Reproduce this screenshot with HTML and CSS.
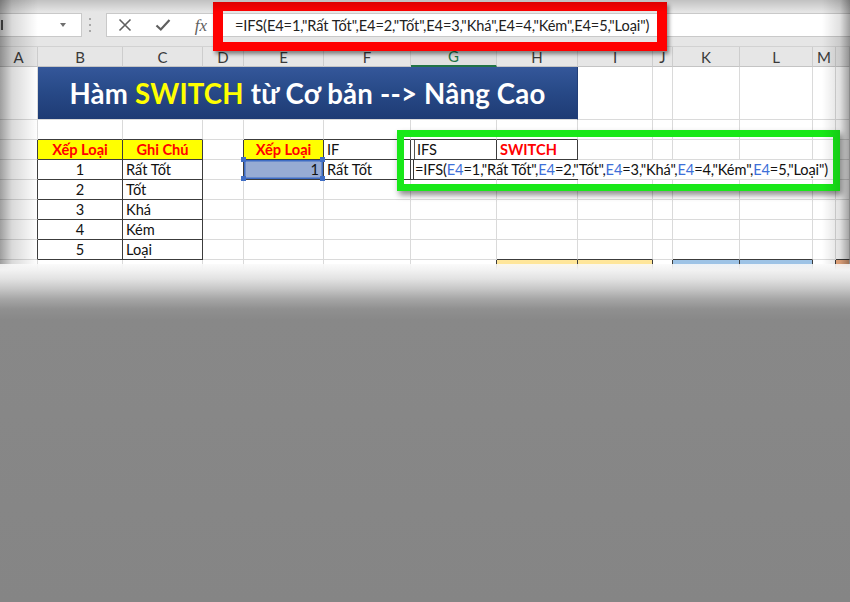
FILE: index.html
```html
<!DOCTYPE html>
<html lang="vi">
<head>
<meta charset="utf-8">
<title>Hàm SWITCH từ Cơ bản --> Nâng Cao</title>
<link rel="stylesheet" href="styles.css">
</head>
<body>
<div class="page">
  <div class="toolbar">
    <div class="namebox"><span class="nb-stub"></span><span class="caret"></span></div>
    <div class="grip"><i></i><i></i><i></i></div>
    <div class="fbar">
      <div class="fbtn">
        <svg width="14" height="14" viewBox="0 0 14 14"><path d="M1.5 1.5 L12.5 12.5 M12.5 1.5 L1.5 12.5" stroke="#5f5f5f" stroke-width="1.6" fill="none"/></svg>
      </div>
      <div class="fbtn">
        <svg width="16" height="14" viewBox="0 0 16 14"><path d="M1.5 7.5 L5.8 11.5 L14.5 2" stroke="#5f5f5f" stroke-width="2.2" fill="none"/></svg>
      </div>
      <div class="fbtn fx">fx</div>
      <div class="ftext">=IFS(E4=1,"Rất Tốt",E4=2,"Tốt",E4=3,"Khá",E4=4,"Kém",E4=5,"Loại")</div>
    </div>
  </div>

  <table class="sheet">
    <colgroup>
      <col class="cA"><col class="cB"><col class="cC"><col class="cD"><col class="cE"><col class="cF"><col class="cG"><col class="cH"><col class="cI"><col class="cJ"><col class="cK"><col class="cL"><col class="cM"><col class="cN">
    </colgroup>
    <thead>
      <tr>
        <th>A</th><th>B</th><th>C</th><th>D</th><th>E</th><th>F</th><th class="act">G</th><th>H</th><th>I</th><th>J</th><th>K</th><th>L</th><th>M</th><th></th>
      </tr>
    </thead>
    <tbody>
      <tr class="tall">
        <td></td>
        <td class="banner" colspan="7">Hàm <span class="hl">SWITCH</span> từ Cơ bản --&gt; Nâng Cao</td>
        <td></td><td></td><td></td><td></td><td></td><td></td>
      </tr>
      <tr>
        <td></td><td class="bb"></td><td class="bb"></td><td></td><td class="bb"></td><td class="bb"></td><td class="bb"></td><td class="bb"></td><td></td><td></td><td></td><td></td><td></td><td></td>
      </tr>
      <tr>
        <td class="rb"></td>
        <td class="rb bb hdr">Xếp Loại</td>
        <td class="rb bb hdr">Ghi Chú</td>
        <td class="rb"></td>
        <td class="rb bb hdr">Xếp Loại</td>
        <td class="rb bb">IF</td>
        <td class="rb bb cur">IFS</td>
        <td class="rb bb red">SWITCH</td>
        <td></td><td></td><td></td><td></td><td></td><td></td>
      </tr>
      <tr>
        <td class="rb"></td>
        <td class="rb bb c">1</td>
        <td class="rb bb">Rất Tốt</td>
        <td class="rb"></td>
        <td class="rb bb sel r">1</td>
        <td class="rb bb">Rất Tốt</td>
        <td class="bb edit"><span class="edit-text">=IFS(<b>E4</b>=1,"Rất Tốt",<b>E4</b>=2,"Tốt",<b>E4</b>=3,"Khá",<b>E4</b>=4,"Kém",<b>E4</b>=5,"Loại")</span></td>
        <td class="rb bb"></td>
        <td></td><td></td><td></td><td></td><td></td><td></td>
      </tr>
      <tr>
        <td class="rb"></td><td class="rb bb c">2</td><td class="rb bb">Tốt</td><td></td><td></td><td></td><td></td><td></td><td></td><td></td><td></td><td></td><td></td><td></td>
      </tr>
      <tr>
        <td class="rb"></td><td class="rb bb c">3</td><td class="rb bb">Khá</td><td></td><td></td><td></td><td></td><td></td><td></td><td></td><td></td><td></td><td></td><td></td>
      </tr>
      <tr>
        <td class="rb"></td><td class="rb bb c">4</td><td class="rb bb">Kém</td><td></td><td></td><td></td><td></td><td></td><td></td><td></td><td></td><td></td><td></td><td></td>
      </tr>
      <tr>
        <td class="rb"></td><td class="rb bb c">5</td><td class="rb bb">Loại</td><td></td><td></td><td></td><td></td><td class="bb"></td><td class="bb"></td><td></td><td class="bb"></td><td class="bb"></td><td></td><td class="bb"></td>
      </tr>
      <tr>
        <td></td><td></td><td></td><td></td><td></td><td></td><td class="rb"></td><td class="rb yel"></td><td class="rb yel"></td><td class="rb"></td><td class="rb blu"></td><td class="rb blu"></td><td class="rb"></td><td class="org"></td>
      </tr>
      <tr>
        <td></td><td></td><td></td><td></td><td></td><td></td><td></td><td></td><td></td><td></td><td></td><td></td><td></td><td></td>
      </tr>
    </tbody>
  </table>

  <div class="redbox"></div>
  <div class="greenbox"></div>
  <div class="vig-left"></div>
  <div class="vig-right"></div>
  <div class="vig-top"></div>
  <div class="fade-bottom"></div>
</div>
</body>
</html>
```

FILE: styles.css
```css
* { box-sizing: border-box; }
html, body { margin: 0; padding: 0; }
body { font-family: Lato, "Noto Sans", sans-serif; background: #878787; }

.page {
  position: relative;
  width: 850px;
  height: 602px;
  overflow: hidden;
  background: #fff;
}

/* ---------- toolbar ---------- */
.toolbar {
  display: flex;
  align-items: flex-start;
  height: 47px;
  padding-top: 13px;
  background: #e6e6e6;
  border-bottom: 1px solid #d2d2d2;
}
.namebox {
  width: 82px;
  height: 24px;
  background: #fff;
  border: 1px solid #c9c9c9;
  border-left: none;
  display: flex;
  align-items: center;
}
.nb-stub {
  width: 1.5px;
  height: 10px;
  margin-left: 1px;
  background: #555;
}
.caret {
  margin-left: auto;
  margin-right: 15px;
  width: 0;
  height: 0;
  border-left: 3.5px solid transparent;
  border-right: 3.5px solid transparent;
  border-top: 4px solid #6f6f6f;
}
.grip {
  width: 24px;
  height: 24px;
  padding-left: 7px;
  display: flex;
  flex-direction: column;
  justify-content: center;
  gap: 4px;
}
.grip i {
  display: block;
  width: 2px;
  height: 2px;
  background: #a8a8a8;
}
.fbar {
  flex: 1;
  height: 24px;
  background: #fff;
  border: 1px solid #c9c9c9;
  border-right: none;
  display: flex;
  align-items: center;
}
.fbtn {
  width: 38px;
  display: flex;
  justify-content: center;
  align-items: center;
}
.fbtn:first-child { margin-left: -1px; }
.fx {
  font-family: "Liberation Serif", serif;
  font-style: italic;
  font-size: 17px;
  color: #5f5f5f;
  line-height: 1;
}
.ftext {
  padding-left: 15px;
  font-size: 14.6px;
  letter-spacing: -0.1px;
  color: #222;
  white-space: nowrap;
}

/* ---------- sheet ---------- */
.sheet {
  table-layout: fixed;
  width: 850px;
  border-collapse: separate;
  border-spacing: 0;
  font-size: 14.6px;
  color: #111;
}
.cA { width: 38px; } .cB { width: 85px; } .cC { width: 80px; } .cD { width: 41px; }
.cE { width: 80px; } .cF { width: 87px; } .cG { width: 86px; } .cH { width: 81px; }
.cI { width: 75px; } .cJ { width: 20px; } .cK { width: 67px; } .cL { width: 73px; }
.cM { width: 23px; } .cN { width: 14px; }

.sheet th {
  height: 20px;
  padding: 0;
  font-weight: normal;
  font-size: 15px;
  color: #3a3a3a;
  background: #e6e6e6;
  border-right: 1px solid #cdcdcd;
  border-bottom: 1px solid #c4c4c4;
  text-align: center;
  line-height: 18px;
}
.sheet th.act {
  color: #217346;
  background: #e0e0e0;
  border-bottom: 2px solid #217346;
}
.sheet td {
  height: 20px;
  padding: 0 3px;
  border-right: 1px solid #dadada;
  border-bottom: 1px solid #dadada;
  white-space: nowrap;
  overflow: hidden;
  line-height: 18px;
  vertical-align: bottom;
}
.sheet tr.tall td { height: 53px; }

.sheet td.rb { border-right-color: #3c3c3c; }
.sheet td.bb { border-bottom-color: #3c3c3c; }
.sheet td.c { text-align: center; }
.sheet td.r { text-align: right; padding-right: 4px; }
.sheet td.hdr {
  background: #ffff00;
  color: #ff0000;
  font-weight: bold;
  text-align: center;
}
.sheet td.red { color: #ff0000; font-weight: bold; }

.sheet td.banner {
  background: linear-gradient(#34579a 0%, #284a88 45%, #1e3b74 100%);
  border-right-color: #223f78;
  color: #fff;
  font-weight: bold;
  font-size: 27.6px;
  text-align: center;
  vertical-align: middle;
  line-height: 32px;
  padding-top: 2px;
  letter-spacing: 0.2px;
}
.banner .hl { color: #ffff00; }

.sheet td.cur { box-shadow: inset 3px 0 0 #fff, inset 4px 0 0 #555; padding-left: 6px; }

.sheet td.sel {
  position: relative;
  overflow: visible;
  background: #97abd3;
  box-shadow: inset 0 0 0 1.5px #3f6cc4;
}
.sheet td.sel::before {
  content: "";
  position: absolute;
  left: -3px;
  top: -3px;
  width: 5px;
  height: 5px;
  background: #3f6cc4;
  box-shadow: 79px 0 0 #3f6cc4, 0 19px 0 #3f6cc4, 79px 19px 0 #3f6cc4;
}

.sheet td.edit {
  overflow: visible;
  padding: 0;
  vertical-align: top;
}
.edit-text {
  display: inline-block;
  height: 19px;
  min-width: 420px;
  padding-left: 1px;
  margin-left: 2px;
  border-left: 1px solid #333;
  background: #fff;
  line-height: 19px;
  letter-spacing: -0.12px;
  color: #111;
}
.edit-text b { font-weight: normal; color: #3d6fd8; }

.sheet td.yel { background: #ffe699; }
.sheet td.blu { background: #9dc3e6; }
.sheet td.org { background: #f4b084; }

/* ---------- overlays ---------- */
.redbox {
  position: absolute;
  left: 213px;
  top: 2px;
  width: 454px;
  height: 49px;
  border: 9px solid #ff0000;
  border-left-width: 10px;
  border-right-width: 10px;
  box-shadow: 2px 3px 4px rgba(0, 0, 0, 0.45);
}
.greenbox {
  position: absolute;
  left: 397px;
  top: 130px;
  width: 443px;
  height: 61px;
  border: 7px solid #18e818;
  box-shadow: 2px 4px 6px rgba(0, 0, 0, 0.45);
}
.vig-left {
  position: absolute;
  left: 0;
  top: 0;
  width: 40px;
  height: 100%;
  background: linear-gradient(to right, rgba(0, 0, 0, 0.38), rgba(0, 0, 0, 0.15) 12px, rgba(0, 0, 0, 0) 38px);
}
.vig-right {
  position: absolute;
  right: 0;
  top: 0;
  width: 30px;
  height: 100%;
  background: linear-gradient(to left, rgba(0, 0, 0, 0.38), rgba(0, 0, 0, 0.12) 10px, rgba(0, 0, 0, 0) 28px);
}
.vig-top {
  position: absolute;
  left: 0;
  top: 0;
  width: 100%;
  height: 12px;
  background: linear-gradient(to bottom, rgba(0, 0, 0, 0.16), rgba(0, 0, 0, 0));
}
.fade-bottom {
  position: absolute;
  left: 0;
  top: 264px;
  width: 100%;
  bottom: 0;
  background: linear-gradient(to bottom,
    rgba(250, 250, 250, 0.85) 0px,
    #f2f2f2 6px,
    #e2e2e2 15px,
    #c6c6c6 25px,
    #a6a6a6 35px,
    #909090 45px,
    #888888 56px,
    #858585 100%);
}
```
